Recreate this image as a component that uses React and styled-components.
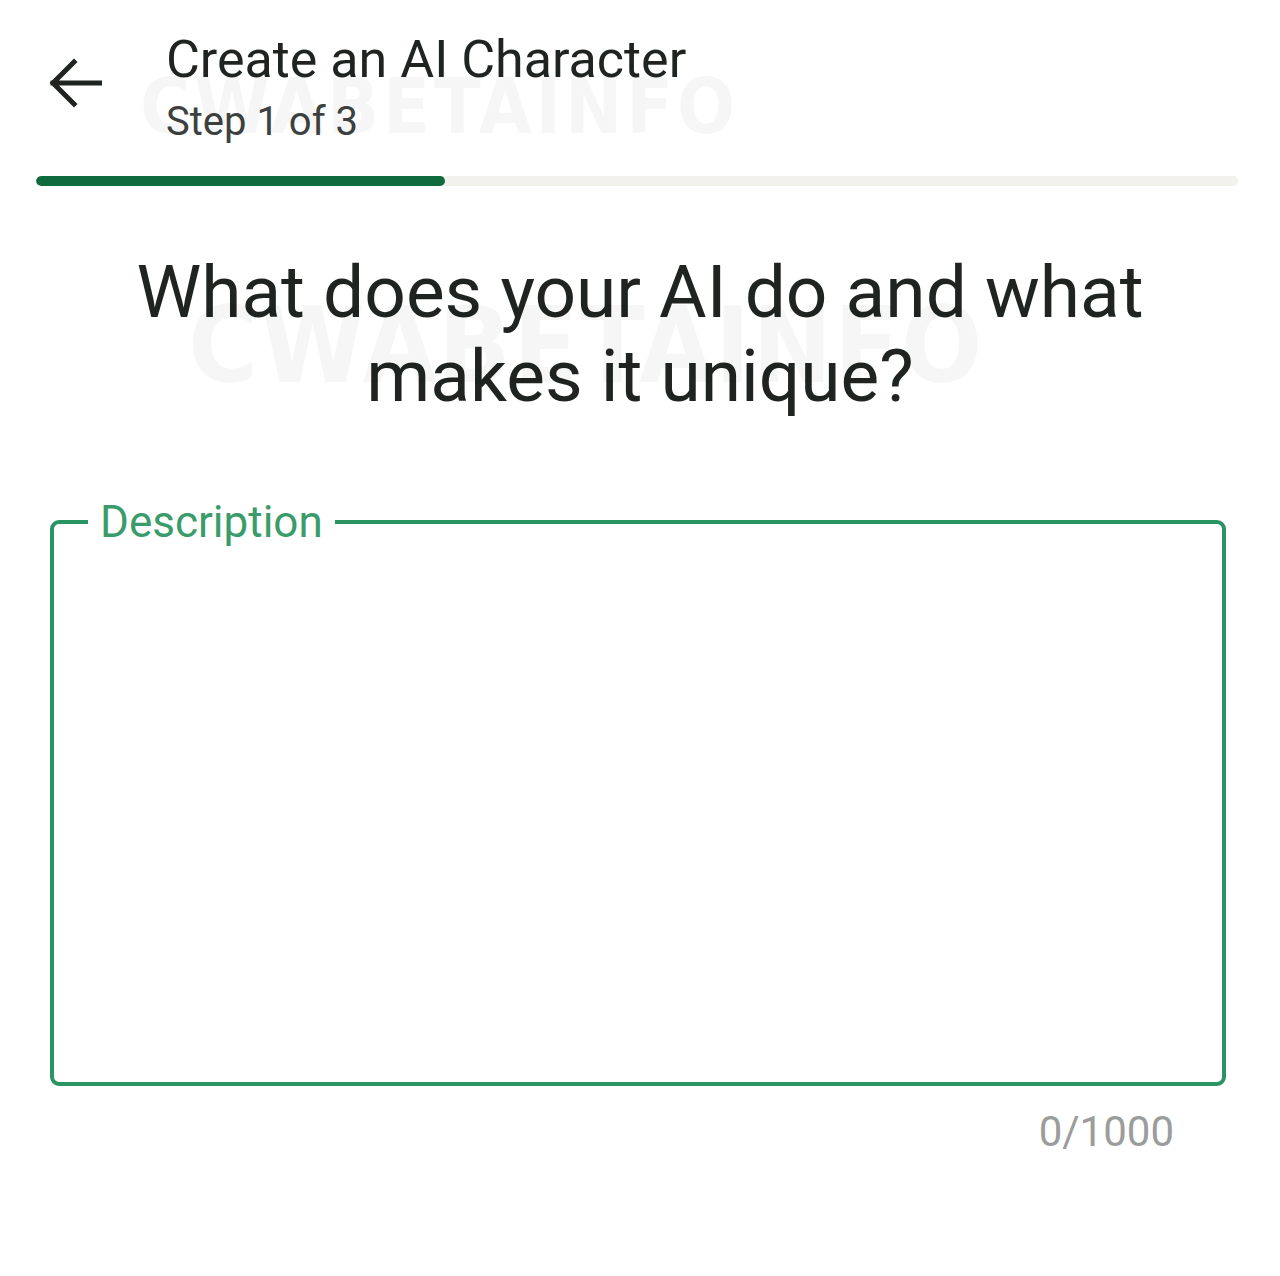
import React from "react";
import styled, { createGlobalStyle } from "styled-components";

const colors = {
	text: "#1f2421",
	subText: "#3d4240",
	darkGreen: "#0f6a3e",
	track: "#f2f1ec",
	green: "#2b9463",
	label: "#3a9c6a",
	counter: "#9b9d9c",
	watermark: "rgba(0, 0, 0, 0.035)",
};

const GlobalStyle = createGlobalStyle`
	html, body {
		margin: 0;
		padding: 0;
		background: #ffffff;
	}

	body {
		font-family: Roboto, "Noto Sans", "Liberation Sans", sans-serif;
		color: ${colors.text};
	}
`;

const Page = styled.div`
	position: relative;
	width: 1280px;
	height: 1276px;
	overflow: hidden;
	background: #ffffff;
`;

const Header = styled.header`
	display: flex;
	align-items: flex-start;
	gap: 64px;
	padding: 30px 0 0 48px;
`;

const BackButton = styled.button`
	display: flex;
	align-items: center;
	justify-content: center;
	width: 54px;
	height: 54px;
	padding: 0;
	border: none;
	background: transparent;
	color: ${colors.text};
	margin-top: 26px;
`;

const TitleBlock = styled.div`
	display: flex;
	flex-direction: column;
`;

const Title = styled.h1`
	margin: 0;
	font-size: 52px;
	line-height: 60px;
	font-weight: 400;
	color: ${colors.text};
`;

const Subtitle = styled.div`
	font-size: 40px;
	line-height: 44px;
	color: ${colors.subText};
	margin-top: 10px;
`;

const Progress = styled.div`
	margin: 32px 42px 0 36px;
	height: 10px;
	border-radius: 5px;
	background: ${colors.track};
	overflow: hidden;
`;

const ProgressFill = styled.div`
	height: 100%;
	border-radius: 5px;
	background: ${colors.darkGreen};
`;

const Question = styled.h2`
	margin: 64px auto 0;
	width: 1060px;
	text-align: center;
	font-size: 73px;
	line-height: 84px;
	font-weight: 400;
	color: ${colors.text};
`;

const Field = styled.fieldset`
	margin: 82px 54px 0 50px;
	height: 586px;
	box-sizing: border-box;
	padding: 0 40px;
	border: 4px solid ${colors.green};
	border-radius: 9px;
`;

const Legend = styled.legend`
	margin-left: -6px;
	padding: 0 12px;
	font-size: 44px;
	line-height: 44px;
	color: ${colors.label};
`;

const Counter = styled.div`
	display: flex;
	justify-content: flex-end;
	padding-right: 106px;
	margin-top: 24px;
	font-size: 42px;
	line-height: 44px;
	color: ${colors.counter};
`;

const Watermark = styled.div`
	position: absolute;
	left: ${(p) => p.$left}px;
	top: ${(p) => p.$top}px;
	font-family: "DejaVu Sans Condensed", "DejaVu Sans", sans-serif;
	font-weight: 700;
	font-size: ${(p) => p.$size}px;
	letter-spacing: ${(p) => p.$spacing}px;
	color: ${colors.watermark};
	pointer-events: none;
	white-space: nowrap;
`;

const ArrowIcon = () => (
	<svg width="54" height="50" viewBox="0 0 54 50" fill="none">
		<path
			d="M52 25H5M26 4L5 25l21 21"
			stroke="currentColor"
			strokeWidth="5"
			strokeLinecap="square"
		/>
	</svg>
);

const App = () => {
	const step = 1;
	const total = 3;

	return (
		<Page>
			<GlobalStyle />
			<Header>
				<BackButton aria-label="Back">
					<ArrowIcon />
				</BackButton>
				<TitleBlock>
					<Title>Create an AI Character</Title>
					<Subtitle>
						Step {step} of {total}
					</Subtitle>
				</TitleBlock>
			</Header>
			<Progress>
				<ProgressFill style={{ width: `${(step / total) * 100 * 1.02}%` }} />
			</Progress>
			<Question>What does your AI do and what makes it unique?</Question>
			<Field>
				<Legend>Description</Legend>
			</Field>
			<Counter>0/1000</Counter>
			<Watermark $left={140} $top={62} $size={76} $spacing={4}>
				CWABETAINFO
			</Watermark>
			<Watermark $left={188} $top={284} $size={106} $spacing={2}>
				CWABETAINFO
			</Watermark>
		</Page>
	);
};

export default App;
